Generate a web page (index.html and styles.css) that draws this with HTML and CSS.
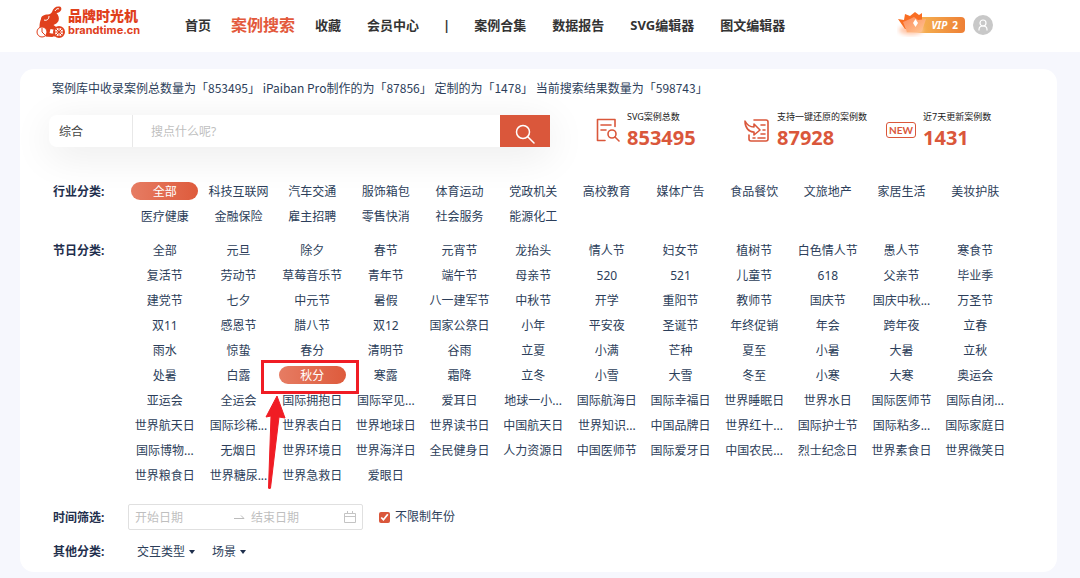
FILE: index.html
```
<!DOCTYPE html>
<html lang="zh-CN">
<head>
    <meta charset="UTF-8">
    <meta name="viewport" content="width=device-width, initial-scale=1.0">
    <title>案例搜索</title>
    <link rel="stylesheet" href="styles.css">
</head>
<body>
    <header class="header">
        <a class="logo" href="#">
            <svg width="30" height="34" viewBox="0 0 30 34" fill="none" stroke="#e0401c">
                <path d="M5 14c0-3 3-4.500 7-4.500 2 0 3-1 4-2.500 1-4 4-6 7.500-5.500 2.500.5 2.500 4 0 5.500-1 .6-2 1-3 1 2 2 3 5 2 8-1 2-3 3-5 4l4 3-2 2-5-1-1 4 4 2-1 2-9-1c-3-2-5-6-4-9 0-3 .5-6 1.500-8z" fill="#e0401c" stroke="none"/>
                <path d="M19 6c1-2 3-3 4-2" stroke="#fff"/>
                <path d="M13 11c0 3-2 5-5 4" stroke="#fff"/>
                <circle cx="6" cy="27" r="5" fill="#fff"/>
                <path d="M6 23v4l3 3"/>
                <circle cx="23" cy="27" r="5" fill="#fff" stroke-width="2"/>
                <path d="M18 27h10M23 22v10M20 24l6 6M26 24l-6 6"/>
                <path d="M10 30h9" stroke-width="3"/>
            </svg>
            <span class="logo-text">
                <span class="logo-name">品牌时光机</span>
                <span class="logo-domain">brandtime.cn</span>
            </span>
        </a>
        <nav class="nav">
            <a href="#">首页</a>
            <a href="#" class="active">案例搜索</a>
            <a href="#">收藏</a>
            <a href="#">会员中心</a>
            <span class="nav-line">|</span>
            <a href="#">案例合集</a>
            <a href="#">数据报告</a>
            <a href="#">SVG编辑器</a>
            <a href="#">图文编辑器</a>
        </nav>
        <div class="user">
            <a class="vip" href="#">
                <svg class="vip-icon" width="34" height="26" viewBox="0 0 34 26">
                    <defs>
                        <linearGradient id="crown" x1="0" y1="0" x2="1" y2="1">
                            <stop offset="0" stop-color="#fc8a5c"/>
                            <stop offset="1" stop-color="#ffc692"/>
                        </linearGradient>
                        <filter id="glow" x="-30%" y="-30%" width="160%" height="160%">
                            <feGaussianBlur stdDeviation="2"/>
                        </filter>
                    </defs>
                    <ellipse cx="14" cy="19" rx="12" ry="5" fill="#ffc9ae" filter="url(#glow)"/>
                    <path d="M1 8l6 1 1-6 5 2 5-4 4 3 3-2v8l-5 8H8z" fill="#f96d22"/>
                    <path d="M6 11l7-3 4-2 4 3 8-1-4 12q-1 1-2 1H10z" fill="url(#crown)"/>
                    <path d="M18.500 8l2.500 4-2.500 4-2.500-4z" fill="#fff"/>
                </svg>
                <span class="vip-label">VIP</span>
                <span>2</span>
            </a>
            <a class="avatar" href="#" aria-label="我的">
                <svg width="20" height="20" viewBox="0 0 20 20" fill="none" stroke="#fff" stroke-width="1.200">
                    <circle cx="10" cy="8" r="3"/>
                    <path d="M6 15.500v-1c0-2 1.500-3.500 4-3.500s4 1.500 4 3.500v1"/>
                </svg>
            </a>
        </div>
    </header>

    <main class="panel">
        <p class="summary">案例库中收录案例总数量为「853495」 iPaiban Pro制作的为「87856」 定制的为「1478」 当前搜索结果数量为「598743」</p>

        <div class="top">
            <form class="search">
                <select class="search-type" aria-label="搜索类型">
                    <option>综合</option>
                </select>
                <input class="search-input" type="text" placeholder="搜点什么呢?" aria-label="搜索">
                <button class="search-btn" type="button" aria-label="搜索">
                    <svg width="20" height="20" viewBox="0 0 20 20" fill="none" stroke="#fff" stroke-width="1.500" stroke-linecap="round">
                        <circle cx="8" cy="8" r="6.500"/>
                        <path d="M13 13l6 6"/>
                    </svg>
                </button>
            </form>
            <div class="stats">
                <div class="stat">
                    <svg width="24" height="24" viewBox="0 0 24 24" fill="none" stroke="#da573b" stroke-width="1.600" stroke-linecap="round" stroke-linejoin="round">
                        <path d="M9 22.500H1.500V1.500h17.500v7M5 7h10M5 12h5"/>
                        <circle cx="16" cy="16" r="4"/>
                        <path d="M19 19l4 4"/>
                    </svg>
                    <div>
                        <div class="stat-name">SVG案例总数</div>
                        <div class="stat-num">853495</div>
                    </div>
                </div>
                <div class="stat">
                    <svg width="26" height="24" viewBox="0 0 26 24" fill="none" stroke="#da573b" stroke-width="1.600" stroke-linecap="round" stroke-linejoin="round">
                        <path d="M10 2h12q2 0 2 2v17q0 2-2 2H7q-2 0-2-2v-4"/>
                        <path d="M1 3c2 4 5 6 9 6V6l6 6-6 5v-3C5 14 1 10 1 3zM17 7h4M19 12h2M17 16h4M9 20h2M14 20h7"/>
                    </svg>
                    <div>
                        <div class="stat-name">支持一键还原的案例数</div>
                        <div class="stat-num">87928</div>
                    </div>
                </div>
                <div class="stat">
                    <span class="new">NEW</span>
                    <div>
                        <div class="stat-name">近7天更新案例数</div>
                        <div class="stat-num">1431</div>
                    </div>
                </div>
            </div>
        </div>

        <section class="filter">
            <h2>行业分类:</h2>
            <div class="tags">
                <button class="tag on">全部</button>
                <button class="tag">科技互联网</button>
                <button class="tag">汽车交通</button>
                <button class="tag">服饰箱包</button>
                <button class="tag">体育运动</button>
                <button class="tag">党政机关</button>
                <button class="tag">高校教育</button>
                <button class="tag">媒体广告</button>
                <button class="tag">食品餐饮</button>
                <button class="tag">文旅地产</button>
                <button class="tag">家居生活</button>
                <button class="tag">美妆护肤</button>
                <button class="tag">医疗健康</button>
                <button class="tag">金融保险</button>
                <button class="tag">雇主招聘</button>
                <button class="tag">零售快消</button>
                <button class="tag">社会服务</button>
                <button class="tag">能源化工</button>
            </div>
        </section>

        <section class="filter">
            <h2>节日分类:</h2>
            <div class="tags">
                <button class="tag">全部</button>
                <button class="tag">元旦</button>
                <button class="tag">除夕</button>
                <button class="tag">春节</button>
                <button class="tag">元宵节</button>
                <button class="tag">龙抬头</button>
                <button class="tag">情人节</button>
                <button class="tag">妇女节</button>
                <button class="tag">植树节</button>
                <button class="tag">白色情人节</button>
                <button class="tag">愚人节</button>
                <button class="tag">寒食节</button>

                <button class="tag">复活节</button>
                <button class="tag">劳动节</button>
                <button class="tag">草莓音乐节</button>
                <button class="tag">青年节</button>
                <button class="tag">端午节</button>
                <button class="tag">母亲节</button>
                <button class="tag">520</button>
                <button class="tag">521</button>
                <button class="tag">儿童节</button>
                <button class="tag">618</button>
                <button class="tag">父亲节</button>
                <button class="tag">毕业季</button>

                <button class="tag">建党节</button>
                <button class="tag">七夕</button>
                <button class="tag">中元节</button>
                <button class="tag">暑假</button>
                <button class="tag">八一建军节</button>
                <button class="tag">中秋节</button>
                <button class="tag">开学</button>
                <button class="tag">重阳节</button>
                <button class="tag">教师节</button>
                <button class="tag">国庆节</button>
                <button class="tag">国庆中秋...</button>
                <button class="tag">万圣节</button>

                <button class="tag">双11</button>
                <button class="tag">感恩节</button>
                <button class="tag">腊八节</button>
                <button class="tag">双12</button>
                <button class="tag">国家公祭日</button>
                <button class="tag">小年</button>
                <button class="tag">平安夜</button>
                <button class="tag">圣诞节</button>
                <button class="tag">年终促销</button>
                <button class="tag">年会</button>
                <button class="tag">跨年夜</button>
                <button class="tag">立春</button>

                <button class="tag">雨水</button>
                <button class="tag">惊蛰</button>
                <button class="tag">春分</button>
                <button class="tag">清明节</button>
                <button class="tag">谷雨</button>
                <button class="tag">立夏</button>
                <button class="tag">小满</button>
                <button class="tag">芒种</button>
                <button class="tag">夏至</button>
                <button class="tag">小暑</button>
                <button class="tag">大暑</button>
                <button class="tag">立秋</button>

                <button class="tag">处暑</button>
                <button class="tag">白露</button>
                <span class="marked">
                    <button class="tag on">秋分</button>
                    <svg class="mark" width="98" height="130" viewBox="0 0 98 130">
                        <rect x="1.500" y="1.500" width="95" height="31" fill="none" stroke="#f01c24" stroke-width="3"/>
                        <path d="M16 36l8 22-6-1-8.500 71q-1 2-2 0L10 56l-5 1z" fill="#f01c24" stroke="#f01c24" stroke-linejoin="round"/>
                    </svg>
                </span>
                <button class="tag">寒露</button>
                <button class="tag">霜降</button>
                <button class="tag">立冬</button>
                <button class="tag">小雪</button>
                <button class="tag">大雪</button>
                <button class="tag">冬至</button>
                <button class="tag">小寒</button>
                <button class="tag">大寒</button>
                <button class="tag">奥运会</button>

                <button class="tag">亚运会</button>
                <button class="tag">全运会</button>
                <button class="tag">国际拥抱日</button>
                <button class="tag">国际罕见...</button>
                <button class="tag">爱耳日</button>
                <button class="tag">地球一小...</button>
                <button class="tag">国际航海日</button>
                <button class="tag">国际幸福日</button>
                <button class="tag">世界睡眠日</button>
                <button class="tag">世界水日</button>
                <button class="tag">国际医师节</button>
                <button class="tag">国际自闭...</button>

                <button class="tag">世界航天日</button>
                <button class="tag">国际珍稀...</button>
                <button class="tag">世界表白日</button>
                <button class="tag">世界地球日</button>
                <button class="tag">世界读书日</button>
                <button class="tag">中国航天日</button>
                <button class="tag">世界知识...</button>
                <button class="tag">中国品牌日</button>
                <button class="tag">世界红十...</button>
                <button class="tag">国际护士节</button>
                <button class="tag">国际粘多...</button>
                <button class="tag">国际家庭日</button>

                <button class="tag">国际博物...</button>
                <button class="tag">无烟日</button>
                <button class="tag">世界环境日</button>
                <button class="tag">世界海洋日</button>
                <button class="tag">全民健身日</button>
                <button class="tag">人力资源日</button>
                <button class="tag">中国医师节</button>
                <button class="tag">国际爱牙日</button>
                <button class="tag">中国农民...</button>
                <button class="tag">烈士纪念日</button>
                <button class="tag">世界素食日</button>
                <button class="tag">世界微笑日</button>

                <button class="tag">世界粮食日</button>
                <button class="tag">世界糖尿...</button>
                <button class="tag">世界急救日</button>
                <button class="tag">爱眼日</button>
            </div>
        </section>

        <section class="filter filter-time">
            <h2>时间筛选:</h2>
            <div class="time">
                <div class="range">
                    <input type="text" placeholder="开始日期" aria-label="开始日期">
                    <svg width="12" height="8" viewBox="0 0 12 8" fill="none" stroke="#bbb">
                        <path d="M1 5.500h10L8 2.500"/>
                    </svg>
                    <input type="text" placeholder="结束日期" aria-label="结束日期">
                    <svg width="12" height="12" viewBox="0 0 12 12" fill="none" stroke="#c4c4c4">
                        <path d="M.5 2.500h11v9H.5zM.5 5.500h11M3.500 0v3M8.500 0v3"/>
                    </svg>
                </div>
                <label class="check"><input type="checkbox" checked>不限制年份</label>
            </div>
        </section>

        <section class="filter filter-other">
            <h2>其他分类:</h2>
            <div class="drops">
                <label class="drop"><select aria-label="交互类型"><option>交互类型</option></select></label>
                <label class="drop"><select aria-label="场景"><option>场景</option></select></label>
            </div>
        </section>
    </main>
</body>
</html>
```
FILE: styles.css
```
* {
    box-sizing: border-box;
    font-family: "Noto Sans", "Noto Sans CJK SC", sans-serif;
}

body {
    margin: 0;
    background: #f6f7fd;
    color: #2c3e5a;
    font-size: 12px;
    line-height: 18px;
}

a {
    color: inherit;
    text-decoration: none;
}

button,
input,
select {
    margin: 0;
    padding: 0;
    border: none;
    background: none;
    color: inherit;
    font-size: 12px;
    line-height: 18px;
    outline: none;
}

button,
select {
    cursor: pointer;
}

select {
    appearance: none;
}

/* header */
.header {
    display: flex;
    align-items: center;
    height: 52px;
    padding: 0 87px 2px 36px;
    background: #fff;
}

.logo {
    display: flex;
    align-items: center;
    gap: 2px;
    width: 136px;
    padding-bottom: 6px;
    color: #e0401c;
}

.logo-text {
    display: flex;
    flex-direction: column;
}

.logo-name {
    font-size: 14px;
    font-weight: 900;
    line-height: 16px;
    white-space: nowrap;
}

.logo-domain {
    font-family: Inter, sans-serif;
    font-size: 11px;
    font-weight: 700;
    line-height: 12px;
}

.nav {
    display: flex;
    align-items: center;
    color: #333;
    font-size: 13px;
    font-weight: 700;
    white-space: nowrap;
}

.nav a {
    padding: 0 13px;
}

.nav-line {
    padding: 0 11px;
}

.nav .active {
    padding: 0 7px;
    color: #e3593c;
    font-size: 16px;
}

.user {
    display: flex;
    align-items: center;
    gap: 8px;
    margin-left: auto;
}

.vip {
    position: relative;
    display: flex;
    align-items: center;
    gap: 5px;
    height: 16px;
    padding: 0 7px 0 26px;
    border-radius: 4px;
    background: linear-gradient(90deg, #f7c25a, #ee7f35);
    color: #fff;
    font-size: 10px;
    font-weight: 700;
}

.vip-icon {
    position: absolute;
    left: -8px;
    top: -6px;
}

.vip-label {
    font-style: italic;
}

.avatar {
    height: 20px;
    border-radius: 50%;
    background: #c8c8c8;
}

/* panel */
.panel {
    margin: 17px 23px 7px 20px;
    padding: 10px 45px 11px 29px;
    border-radius: 14px;
    background: #fff;
}

.summary {
    margin: 0 0 18px;
    padding-left: 3px;
    font-family: "Noto Sans CJK SC", sans-serif;
}

.top {
    display: flex;
    align-items: center;
    gap: 46px;
    height: 32px;
    margin-bottom: 35px;
}

.search {
    display: flex;
    flex: 1;
    height: 32px;
    border-radius: 8px 0 0 8px;
    background: #fff;
    box-shadow: 0 8px 40px rgba(0, 0, 0, 0.09);
}

.search-type {
    width: 84px;
    padding: 2px 0 0 10px;
    border-right: 1px solid #e8e8e8;
    color: #444;
}

.search-input {
    flex: 1;
    min-width: 0;
    padding: 2px 0 0 18px;
}

.search-input::placeholder,
.range input::placeholder {
    color: #bfbfbf;
}

.search-btn {
    display: flex;
    align-items: center;
    justify-content: center;
    width: 50px;
    padding-top: 6px;
    background: #da573b;
}

.stats {
    display: grid;
    grid-template-columns: 148px 142px auto;
    width: 416px;
    padding-bottom: 2px;
    align-items: center;
}

.stat {
    display: flex;
    align-items: center;
    gap: 7px;
}

.stat-name {
    color: #222;
    font-size: 9px;
    line-height: 16px;
    white-space: nowrap;
}

.stat-num {
    color: #da573b;
    font-size: 20px;
    font-weight: 700;
    line-height: 26px;
}

.new {
    width: 30px;
    border: 1px solid #da573b;
    border-radius: 3px;
    color: #da573b;
    font-family: Lato, sans-serif;
    font-size: 10px;
    font-weight: 700;
    line-height: 14px;
    text-align: center;
}

/* filters */
.filter {
    display: grid;
    grid-template-columns: 79px 1fr;
    margin-bottom: 16px;
}

.filter h2 {
    margin: 0;
    padding: 1px 0 0 4px;
    color: #1f2f4d;
    font-size: 12px;
    font-weight: 700;
}

.tags {
    display: grid;
    grid-template-columns: repeat(12, 1fr);
    row-gap: 7px;
    justify-items: center;
}

.tag {
    width: 67px;
    height: 18px;
    padding-top: 2px;
    border-radius: 9px;
    line-height: 16px;
    white-space: nowrap;
}

.tag.on {
    background: linear-gradient(90deg, #e67c63, #de5b3c);
    color: #fff;
}

.marked {
    position: relative;
    height: 18px;
}

.marked .tag {
    display: block;
}

.mark {
    position: absolute;
    left: -18px;
    top: -6px;
    pointer-events: none;
}

.filter-time {
    align-items: center;
    margin: 20px 0 12px;
}

.filter-other {
    margin-bottom: 0;
}

.time {
    display: flex;
    align-items: center;
    gap: 16px;
}

.range {
    display: flex;
    align-items: center;
    width: 235px;
    height: 26px;
    padding: 0 6px;
    border: 1px solid #e0e0e0;
    border-radius: 2px;
}

.range input {
    width: 98px;
    padding-top: 2px;
}

.range svg + input {
    flex: 1;
    min-width: 0;
    padding-left: 6px;
}

.check {
    display: flex;
    align-items: center;
    gap: 5px;
}

.check input {
    width: 11px;
    height: 11px;
    accent-color: #da573b;
}

.drops {
    display: flex;
    gap: 17px;
    padding: 1px 0 0 9px;
}

.drop {
    display: flex;
    align-items: center;
    gap: 3px;
}

.drop::after {
    content: "";
    border: 3px solid transparent;
    border-top: 4px solid #1f2f4d;
    border-bottom: none;
}
```
